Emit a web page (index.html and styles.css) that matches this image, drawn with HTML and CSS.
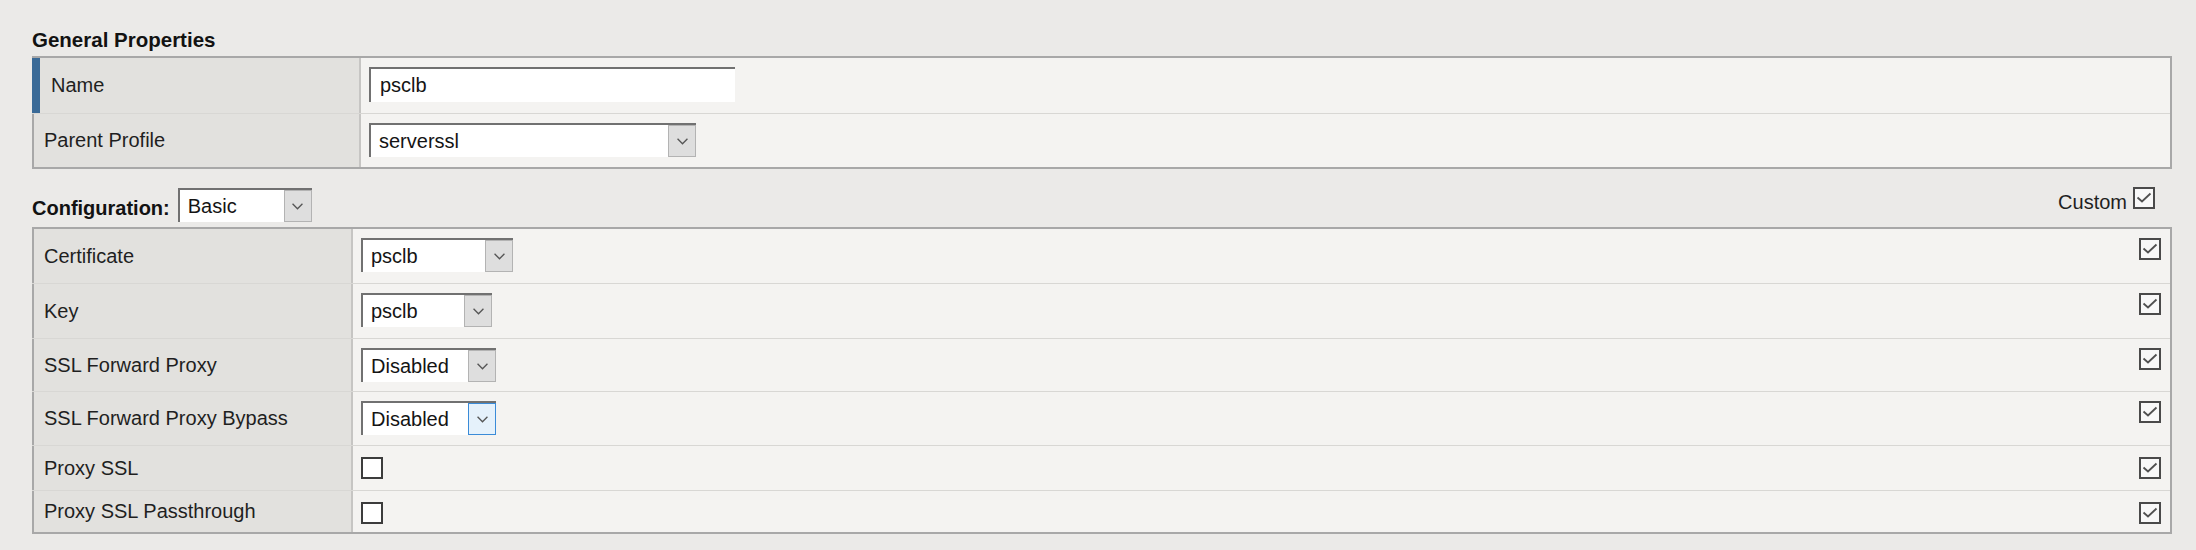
FILE: index.html
```html
<!DOCTYPE html>
<html>
<head>
<meta charset="utf-8">
<title>Server SSL Profile</title>
<link rel="stylesheet" href="styles.css">
</head>
<body>
<div class="page">
  <h2 class="section-title">General Properties</h2>
  <div class="ptable ptable-general">
    <div class="prow prow--h55">
      <div class="plabel plabel--required">Name</div>
      <div class="pvalue"><div class="textbox">psclb</div></div>
    </div>
    <div class="prow prow--h54">
      <div class="plabel">Parent Profile</div>
      <div class="pvalue">
        <div class="select select--parent">
          <span class="select-text">serverssl</span>
          <span class="select-btn"><svg class="chev" viewBox="0 0 10 6"><polyline points="0.5,0.5 5,5 9.5,0.5"/></svg></span>
        </div>
      </div>
    </div>
  </div>

  <div class="config-bar">
    <div class="config-left">
      <span class="config-title">Configuration:</span>
      <div class="select select--basic">
        <span class="select-text">Basic</span>
        <span class="select-btn"><svg class="chev" viewBox="0 0 10 6"><polyline points="0.5,0.5 5,5 9.5,0.5"/></svg></span>
      </div>
    </div>
    <div class="config-right">
      <span class="custom-label">Custom</span>
      <span class="checkbox checkbox--checked"><svg class="tick" viewBox="0 0 18 18"><polyline points="2.5,8.5 7,12.5 15.5,4.5"/></svg></span>
    </div>
  </div>

  <div class="ptable ptable-config">
    <div class="prow prow--h54">
      <div class="plabel">Certificate</div>
      <div class="pvalue">
        <div class="select select--cert">
          <span class="select-text">psclb</span>
          <span class="select-btn"><svg class="chev" viewBox="0 0 10 6"><polyline points="0.5,0.5 5,5 9.5,0.5"/></svg></span>
        </div>
        <span class="checkbox checkbox--checked"><svg class="tick" viewBox="0 0 18 18"><polyline points="2.5,8.5 7,12.5 15.5,4.5"/></svg></span>
      </div>
    </div>
    <div class="prow prow--h55">
      <div class="plabel">Key</div>
      <div class="pvalue">
        <div class="select select--key">
          <span class="select-text">psclb</span>
          <span class="select-btn"><svg class="chev" viewBox="0 0 10 6"><polyline points="0.5,0.5 5,5 9.5,0.5"/></svg></span>
        </div>
        <span class="checkbox checkbox--checked"><svg class="tick" viewBox="0 0 18 18"><polyline points="2.5,8.5 7,12.5 15.5,4.5"/></svg></span>
      </div>
    </div>
    <div class="prow prow--h53">
      <div class="plabel">SSL Forward Proxy</div>
      <div class="pvalue">
        <div class="select select--ssl">
          <span class="select-text">Disabled</span>
          <span class="select-btn"><svg class="chev" viewBox="0 0 10 6"><polyline points="0.5,0.5 5,5 9.5,0.5"/></svg></span>
        </div>
        <span class="checkbox checkbox--checked"><svg class="tick" viewBox="0 0 18 18"><polyline points="2.5,8.5 7,12.5 15.5,4.5"/></svg></span>
      </div>
    </div>
    <div class="prow prow--h54">
      <div class="plabel">SSL Forward Proxy Bypass</div>
      <div class="pvalue">
        <div class="select select--ssl">
          <span class="select-text">Disabled</span>
          <span class="select-btn select-btn--focus"><svg class="chev" viewBox="0 0 10 6"><polyline points="0.5,0.5 5,5 9.5,0.5"/></svg></span>
        </div>
        <span class="checkbox checkbox--checked"><svg class="tick" viewBox="0 0 18 18"><polyline points="2.5,8.5 7,12.5 15.5,4.5"/></svg></span>
      </div>
    </div>
    <div class="prow prow--h45">
      <div class="plabel">Proxy SSL</div>
      <div class="pvalue">
        <span class="checkbox checkbox--low"></span>
        <span class="checkbox checkbox--checked checkbox--low"><svg class="tick" viewBox="0 0 18 18"><polyline points="2.5,8.5 7,12.5 15.5,4.5"/></svg></span>
      </div>
    </div>
    <div class="prow prow--h42">
      <div class="plabel">Proxy SSL Passthrough</div>
      <div class="pvalue">
        <span class="checkbox checkbox--low"></span>
        <span class="checkbox checkbox--checked checkbox--low"><svg class="tick" viewBox="0 0 18 18"><polyline points="2.5,8.5 7,12.5 15.5,4.5"/></svg></span>
      </div>
    </div>
  </div>
</div>
</body>
</html>
```

FILE: styles.css
```css
* { box-sizing: border-box; }

html, body {
  margin: 0;
  padding: 0;
  background: #ebeae8;
}

body {
  font-family: "Liberation Sans", Arial, sans-serif;
  font-size: 20px;
  color: #1f1f1f;
}

.page {
  padding: 28px 24px 0 32px;
}

.section-title {
  margin: 0;
  font-size: 20.5px;
  font-weight: bold;
  line-height: 24px;
  color: #121212;
}

.ptable {
  border-top: 2px solid #a8a8a8;
  border-right: 2px solid #a8a8a8;
  border-bottom: 2px solid #a8a8a8;
}

.ptable-general {
  margin-top: 4px;
}

.prow {
  display: grid;
}

.ptable-general .prow {
  grid-template-columns: 329px 1fr;
}

.ptable-config .prow {
  grid-template-columns: 321px 1fr;
}

.prow + .prow {
  border-top: 1px solid #d8d7d4;
}

.prow--h55 { height: 55px; }
.prow--h54 { height: 54px; }
.prow--h53 { height: 53px; }
.prow--h45 { height: 45px; }
.prow--h42 { height: 42px; }

.plabel {
  display: flex;
  align-items: center;
  background: #e2e1de;
  border-left: 2px solid #a8a8a8;
  border-right: 2px solid #c6c5c3;
  padding-left: 10px;
  color: #1f1f1f;
}

.plabel--required {
  border-left: 8px solid #3a6a97;
  padding-left: 11px;
}

.pvalue {
  display: flex;
  justify-content: space-between;
  align-items: flex-start;
  background: #f4f3f1;
  padding: 9px 9px 0 8px;
}

.textbox {
  width: 366px;
  height: 35px;
  display: flex;
  align-items: center;
  background: #ffffff;
  border-top: 2px solid #717171;
  border-left: 2px solid #717171;
  padding-left: 9px;
  color: #141414;
}

.select {
  display: flex;
  height: 34px;
  background: #ffffff;
  border-top: 2px solid #717171;
  border-left: 2px solid #717171;
}

.select--parent { width: 327px; }
.select--basic { width: 134px; }
.select--cert { width: 152px; }
.select--key { width: 131px; }
.select--ssl { width: 135px; }

.select-text {
  flex: 1;
  display: flex;
  align-items: center;
  padding-left: 8px;
  color: #141414;
}

.select-btn {
  width: 28px;
  height: 32px;
  display: flex;
  align-items: center;
  justify-content: center;
  background: #dedede;
  border: 1px solid #b3b3b3;
}

.select-btn--focus {
  background: #e5f1fb;
  border-color: #3a8bd8;
}

.chev {
  width: 11px;
  height: 7px;
  display: block;
  fill: none;
  stroke: #555555;
  stroke-width: 1.2;
}

.config-bar {
  display: flex;
  justify-content: space-between;
  align-items: flex-start;
  margin-top: 19px;
  margin-bottom: 5px;
}

.config-left {
  display: flex;
  align-items: flex-end;
  gap: 8px;
}

.config-title {
  font-weight: bold;
  color: #121212;
  margin-bottom: 2px;
}

.config-right {
  display: flex;
  align-items: baseline;
  gap: 6px;
  margin-right: 17px;
  margin-top: -1px;
}

.custom-label {
  color: #1f1f1f;
}

.checkbox {
  display: block;
  width: 22px;
  height: 22px;
  background: #ffffff;
  border: 2px solid #3c3c3c;
}

.checkbox--checked {
  background: #f8f8f8;
  border-color: #4a4a4a;
}

.checkbox--low {
  margin-top: 2px;
}

.tick {
  display: block;
  width: 18px;
  height: 18px;
  fill: none;
  stroke: #505050;
  stroke-width: 1.8;
}
```
